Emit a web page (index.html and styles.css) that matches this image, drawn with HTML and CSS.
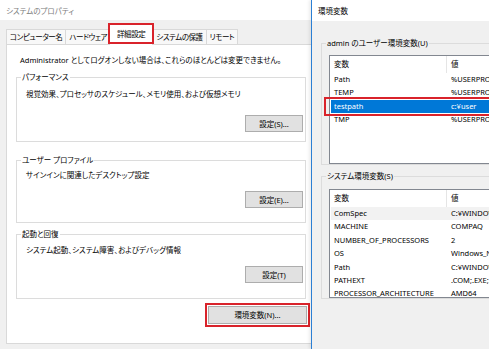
FILE: index.html
```html
<!DOCTYPE html>
<html>
<head>
  <meta charset="UTF-8">
  <title>システムのプロパティ / 環境変数</title>
  <link rel="stylesheet" href="styles.css">
</head>
<body>
  <div class="desk">
    <div class="win sysprop">
      <div class="titlebar">システムのプロパティ</div>
      <div class="body">
        <div class="tabs">
          <div class="tab">コンピューター名</div>
          <div class="tab">ハードウェア</div>
          <div class="tab active">詳細設定</div>
          <div class="tab">システムの保護</div>
          <div class="tab">リモート</div>
        </div>
        <div class="panel">
          <p class="note">Administrator としてログオンしない場合は、これらのほとんどは変更できません。</p>
          <fieldset class="group perf">
            <legend>パフォーマンス</legend>
            <p>視覚効果、プロセッサのスケジュール、メモリ使用、および仮想メモリ</p>
            <div class="btnrow"><button class="btn">設定(S)...</button></div>
          </fieldset>
          <fieldset class="group profile">
            <legend>ユーザー プロファイル</legend>
            <p>サインインに関連したデスクトップ設定</p>
            <div class="btnrow"><button class="btn">設定(E)...</button></div>
          </fieldset>
          <fieldset class="group boot">
            <legend>起動と回復</legend>
            <p>システム起動、システム障害、およびデバッグ情報</p>
            <div class="btnrow"><button class="btn">設定(T)</button></div>
          </fieldset>
          <div class="envrow"><button class="btn env">環境変数(N)...</button></div>
        </div>
      </div>
    </div>

    <div class="win envvars">
      <div class="titlebar">環境変数</div>
      <div class="body">
        <fieldset class="group user">
          <legend>admin のユーザー環境変数(U)</legend>
          <div class="list">
            <div class="row head"><span>変数</span><span>値</span></div>
            <div class="row"><span>Path</span><span>%USERPROFILE%\AppData\Local\Microsoft\WindowsApps;</span></div>
            <div class="row"><span>TEMP</span><span>%USERPROFILE%\AppData\Local\Temp</span></div>
            <div class="row sel"><span>testpath</span><span>c:¥user</span></div>
            <div class="row"><span>TMP</span><span>%USERPROFILE%\AppData\Local\Temp</span></div>
          </div>
        </fieldset>
        <fieldset class="group system">
          <legend>システム環境変数(S)</legend>
          <div class="list clip">
            <div class="row head"><span>変数</span><span>値</span></div>
            <div class="row hot"><span>ComSpec</span><span>C:¥WINDOWS¥system32¥cmd.exe</span></div>
            <div class="row"><span>MACHINE</span><span>COMPAQ</span></div>
            <div class="row"><span>NUMBER_OF_PROCESSORS</span><span>2</span></div>
            <div class="row"><span>OS</span><span>Windows_NT</span></div>
            <div class="row"><span>Path</span><span>C:¥WINDOWS¥system32;C:¥WINDOWS</span></div>
            <div class="row"><span>PATHEXT</span><span>.COM;.EXE;.BAT;.CMD;.VBS</span></div>
            <div class="row"><span>PROCESSOR_ARCHITECTURE</span><span>AMD64</span></div>
          </div>
        </fieldset>
      </div>
    </div>
  </div>
</body>
</html>
```

FILE: styles.css
```css
html, body {margin: 0; height: 100%;}
body {font: 7.5px/12px "Noto Sans", "Noto Sans CJK JP", sans-serif; font-feature-settings: "palt"; color: #000; background: #f0f0f0; overflow: hidden;}

.desk {display: flex; height: 349px; overflow: hidden;}
.win {background: #f0f0f0; overflow: hidden;}
.sysprop {width: 311px; flex: none;}
.envvars {flex: 1; min-width: 0; border-left: 1px solid #2b7fd4; box-shadow: -2px 0 3px rgba(0,0,0,0.08);}

.titlebar {height: 21px; line-height: 23px; padding-left: 6px; background: #fff; white-space: nowrap;}
.sysprop .titlebar {height: 20px; color: #7d7d7d;}

/* tabs + page */
.sysprop .body {padding-left: 6px;}
.tabs {display: flex; align-items: flex-end; height: 24px;}
.tab {height: 15px; line-height: 14px; padding: 0 3px; box-sizing: border-box; border: 1px solid #d9d9d9; border-bottom: 0; margin-right: -1px; background: #f8f8f8; white-space: nowrap; letter-spacing: -0.45px;}
.tab.active {height: 21px; line-height: 18px; margin: 0 -1px -1px -1px; padding: 0 7px; background: #fff; position: relative; z-index: 1;}
.tab.active::after {content: ""; position: absolute; left: -2px; right: -2px; top: -2px; bottom: 1px; border: 2px solid #d9232b;}

.panel {width: 330px; height: 300px; box-sizing: border-box; border: 1px solid #d9d9d9; background: #fff; padding: 9px 0 0 9px;}
.note {margin: 0 0 0 4px; white-space: nowrap;}

.group {margin: 0; padding: 0 2px 0 0; width: 290px; box-sizing: border-box; min-width: 0; border: 1px solid #dcdcdc;}
.group legend {padding: 0 1px; margin-left: 4px; line-height: 12px; white-space: nowrap;}
.group p {margin: 0 0 0 9px; white-space: nowrap;}
.btnrow {display: flex; justify-content: flex-end;}
.btn {height: 17px; width: 58px; padding: 0; box-sizing: border-box; border: 1px solid #adadad; background: #e1e1e1; font: inherit; line-height: 14px; color: #000;}

.perf {margin-top: 5px; padding-bottom: 9px;}
.perf p {margin-top: 5px;}
.perf .btnrow {margin-top: 15px;}
.profile {margin-top: 12px; padding-bottom: 14px;}
.profile p {margin-top: 3px;}
.profile .btnrow {margin-top: 10px;}
.boot {margin-top: 5px; padding-bottom: 15px;}
.boot p {margin-top: 4px;}
.boot .btnrow {margin-top: 10px;}

.envrow {display: flex; justify-content: flex-end; width: 291px; margin-top: 7px;}
.btn.env {width: 99px; height: 18px; outline: 2px solid #d9232b; outline-offset: 1px;}

/* environment variables */
.envvars .body {padding: 16px 0 0 9px;}
.envvars .group {width: 320px; padding: 0;}
.list {margin: 6px 0 0 7px; width: 300px; height: 109px; box-sizing: border-box; border: 1px solid #828790; background: #fff;}
.list.clip {overflow: hidden; margin-top: 7px;}
.user {padding-bottom: 36px;}
.system {margin-top: 5px; padding-bottom: 20px;}

.row {display: grid; grid-template-columns: 116px 1fr; height: 13.4px; line-height: 13.4px; margin-left: 1px; white-space: nowrap;}
.row span {padding-left: 3px; overflow: hidden;}
.row span + span {padding-left: 4px;}
.row.head {height: 17px; line-height: 17px;}
.row.head span:first-child {border-right: 1px solid #e5e5e5;}
.row.hot {background: #f2f2f2;}
.row.sel {background: #0078d7; color: #fff; position: relative;}
.row.sel::after {content: ""; position: absolute; left: -7px; right: -10px; top: -3px; bottom: -3px; border: 2px solid #d9232b;}
```
